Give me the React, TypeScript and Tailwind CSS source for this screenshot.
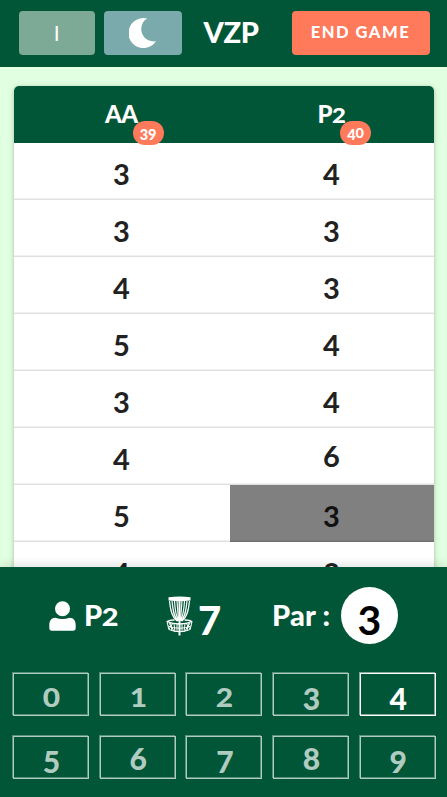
import React from "react";
import clsx from "clsx";

const SMALL = "012";
const LOW = "34579";

/** Digits set as old-style figures: some sit at x-height, some hang below the baseline. */
function Figures({ text }: { text: string }) {
  return (
    <span>
      {text.split("").map((c, i) => (
        <span
          key={i}
          className={clsx(
            SMALL.includes(c) && "mx-[0.04em] inline-block scale-x-[1.16] text-[0.86em] leading-none",
            LOW.includes(c) && "relative top-[0.12em]",
          )}
        >
          {c}
        </span>
      ))}
    </span>
  );
}

function Basket() {
  return (
    <svg viewBox="0 0 27 40" className="h-[40px] w-[27px]" fill="none" stroke="white">
      <path d="M2.500 1.200Q13.500 -.2 24.500 1.200V4.600Q13.500 6 2.500 4.600Z" fill="white" stroke="none" />
      <path d="M3.500 5C4.500 15 6 21 11 25M6 5C7 15 8 21 12 25M8.500 5C9 14 10 20 12.500 25M11 5 12.500 24M23.500 5C22.500 15 21 21 16 25M21 5C20 15 19 21 15 25M18.500 5C18 14 17 20 14.500 25M16 5 14.500 24" strokeWidth="1.150" />
      <path d="M13.500 4V39.500" strokeWidth="2" />
      <path d="M.8 25.500Q4 23.800 8.500 24M26.200 25.500Q23 23.800 18.500 24M.8 25.500Q13.500 30.500 26.200 25.500" strokeWidth="1.300" />
      <path d="M1 25.500 2.800 33.500Q13.500 38 24.200 33.500L26 25.500M2 30Q13.500 34.500 25 30M4.500 26.500 6 35M8 27.500 9 36M11 28V36M16 28V36M19 27.500 18 36M22.500 26.500 21 35M3 27 8 35M24 27 19 35M7 27 3 33M20 27 24 33" strokeWidth="1" />
    </svg>
  );
}

const rows = [
  ["3", "4"],
  ["3", "3"],
  ["4", "3"],
  ["5", "4"],
  ["3", "4"],
  ["4", "6"],
  ["5", "3"],
  ["4", "3"],
];

const players = [
  { name: "AA", total: "39" },
  { name: "P2", total: "40" },
];

export default function App() {
  return (
    <div className="flex h-[797px] w-[447px] flex-col overflow-hidden bg-[#e1ffe1] font-['Lato',sans-serif] font-bold text-white">
      <header className="flex h-[67px] shrink-0 items-start bg-[#005636] pl-[18.500px] pt-[11px]">
        <button className="h-[43.500px] w-[76.500px] rounded-[4px] bg-[#7daa97] text-[21px] font-normal leading-[42px]">I</button>
        <button className="ml-[9px] flex h-[43.500px] w-[78px] items-center justify-center rounded-[4px] bg-[#7aaaab]">
          <svg viewBox="0 0 28 30" className="h-[30px] w-[28px]" fill="white">
            <path d="M18.200 .5A15 15 0 1 0 27 23.300C17 24.500 11.800 17 12.300 10.500C12.600 6 14.500 2.500 18.200 .5Z" />
          </svg>
        </button>
        <h1 className="ml-[21.500px] w-[56.500px] whitespace-nowrap text-[29px] font-black leading-[42px] tracking-[-0.300px]">VZP</h1>
        <button className="ml-[31.500px] h-[43.500px] w-[138px] whitespace-nowrap rounded-[4px] bg-[#ff795b] text-[16.500px] font-black tracking-[1.500px]">
          END GAME
        </button>
      </header>

      <main className="min-h-0 flex-1 overflow-hidden px-[14px] pt-[19px]">
        <div className="w-[420px] rounded-t-[5px] bg-white shadow-[0_1px_5px_rgba(0,0,0,0.25)]">
          <div className="grid h-[57px] grid-cols-[216px_204px] rounded-t-[5px] bg-[#005636]">
            {players.map((p) => (
              <div key={p.name} className="flex justify-center pr-[1.500px] text-[24px] font-black leading-[55px] tracking-[-0.500px]">
                <span className="relative">
                  <Figures text={p.name} />
                  <span className="absolute left-[calc(100%-5px)] top-[35px] z-10 h-[24px] w-[31px] rounded-full bg-[#ff795b] text-center text-[14.500px] leading-[23px] tracking-normal">
                    <Figures text={p.total} />
                  </span>
                </span>
              </div>
            ))}
          </div>
          {rows.map((row, i) => (
            <div key={i} className="grid h-[57px] grid-cols-[216px_204px] text-center text-[29px] leading-[55px] text-[#212121]">
              {row.map((v, j) => (
                <div
                  key={j}
                  className={clsx(
                    "h-[57px] border-b pr-px shadow-[inset_0_-1px_0_rgba(0,0,0,0.06)]",
                    i === 6 && j === 1 ? "border-[#6f6f6f] bg-[#808080] text-[#111]" : "border-[#e0e0e0]",
                  )}
                >
                  <Figures text={v} />
                </div>
              ))}
            </div>
          ))}
        </div>
      </main>

      <footer className="z-20 h-[230px] shrink-0 bg-[#005636] shadow-[0_-2px_10px_rgba(0,0,0,0.13)]">
        <div className="mt-[20px] flex h-[57px] items-center pl-[49px]">
          <svg viewBox="0 0 27 30" className="h-[30px] w-[27px]" fill="white">
            <circle cx="13.500" cy="7.700" r="7.500" />
            <path d="M6.500 16.700Q13.500 19.200 20.500 16.700C25 16.700 26.700 20 26.700 24V27Q26.700 29.700 24 29.700H3Q.3 29.700 .3 27V24C.3 20 2 16.700 6.500 16.700Z" />
          </svg>
          <span className="relative -top-px ml-[8px] w-[36px] whitespace-nowrap text-[29px] font-black tracking-[-0.300px]">
            <Figures text="P2" />
          </span>
          <span className="ml-[45.500px] flex"><Basket /></span>
          <span className="ml-[5.500px] w-[25px] text-[40px] font-black leading-[55px]"><Figures text="7" /></span>
          <span className="relative -top-px ml-[49px] w-[59px] whitespace-nowrap text-[29px] font-black tracking-[0.200px]">Par :</span>
          <span className="ml-[10px] h-[57px] w-[57px] rounded-full bg-white text-center text-[41px] leading-[55px] text-black"><Figures text="3" /></span>
        </div>
        <div className="mt-[29px] grid grid-cols-[repeat(5,76px)] gap-x-[10.700px] gap-y-[20px] pl-[13px]">
          {"0123456789".split("").map((d) => (
            <button
              key={d}
              className={clsx(
                "h-[43px] border pl-px text-[30px] font-black leading-[40px]",
                d === "4"
                  ? "border-white text-white shadow-[-1px_-1px_0_#80ab9b,inset_-1px_-1px_0_#80ab9b]"
                  : "border-[#b0cbc0] text-[#b0cbc0] shadow-[-1px_-1px_0_#589079,inset_-1px_-1px_0_#589079]",
              )}
            >
              <Figures text={d} />
            </button>
          ))}
        </div>
      </footer>
    </div>
  );
}
